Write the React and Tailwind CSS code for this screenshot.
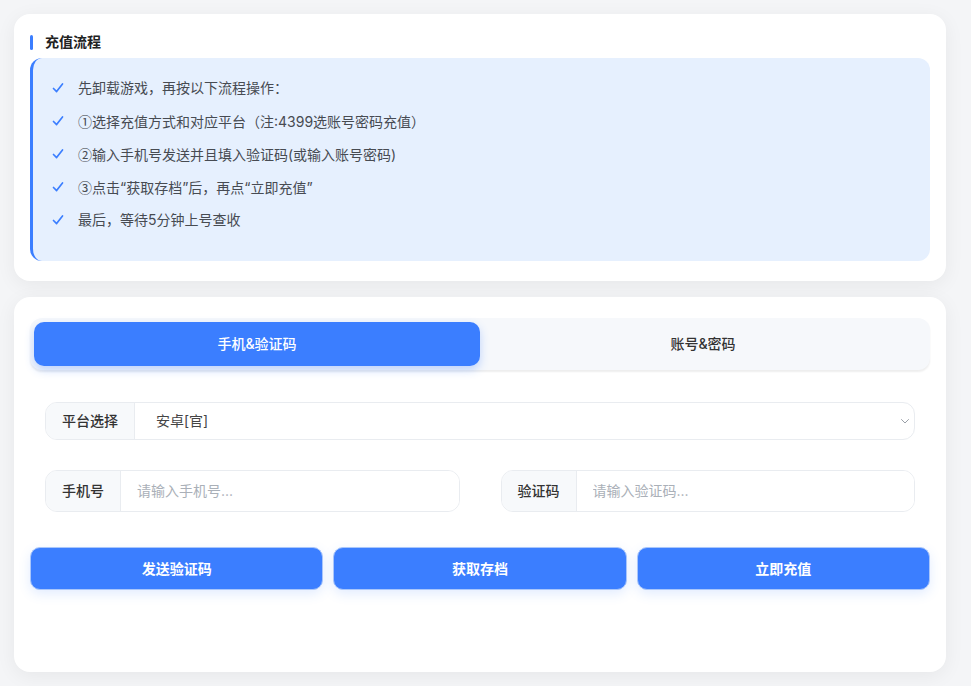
import React, { useState } from 'react';

const steps = [
  ['', '先卸载游戏，再按以下流程操作：'],
  ['①', '选择充值方式和对应平台（注:4399选账号密码充值）'],
  ['②', '输入手机号发送并且填入验证码(或输入账号密码)'],
  ['③', '点击“获取存档”后，再点“立即充值”'],
  ['', '最后，等待5分钟上号查收'],
];

function Check() {
  return (
    <svg width="12" height="12" viewBox="0 0 12 12" fill="none" className="shrink-0">
      <path d="M1.5 6.5 L4.6 9.6 L10.5 2" stroke="#3b7eff" strokeWidth="1.7" strokeLinecap="round" strokeLinejoin="round" />
    </svg>
  );
}

function Field({ label, labelW, placeholder, className }) {
  return (
    <div className={`flex h-[42px] rounded-xl border border-[#e9ecf0] overflow-hidden ${className}`}>
      <div className={`${labelW} flex items-center justify-center bg-[#f7f9fb] border-r border-[#e9ecf0] text-sm font-medium text-[#333]`}>
        {label}
      </div>
      <input
        placeholder={placeholder}
        className="flex-1 px-4 text-sm text-[#333] placeholder-[#aab0b8] outline-none bg-white"
      />
    </div>
  );
}

export default function App() {
  const [tab, setTab] = useState('phone');

  return (
    <div
      className="min-h-[686px] bg-[#f4f5f7] pt-[14px] pl-[14px]"
      style={{ fontFamily: "Inter, 'Noto Sans CJK SC', sans-serif" }}
    >
      <div className="w-[932px] flex flex-col gap-4">
        {/* 充值流程 */}
        <div className="bg-white rounded-2xl shadow-[0_4px_20px_rgba(0,0,0,0.06)] px-4 pt-[20px] pb-5">
          <div className="flex items-center gap-3 h-4 mb-[8px]">
            <span className="w-[3px] h-[15px] rounded-full bg-[#3b7eff]" />
            <h2 className="text-sm font-bold text-[#222]">充值流程</h2>
          </div>
          <div className="rounded-xl border-l-[3px] border-[#3b7eff] bg-[#e6f0fe] pl-[19px] pt-5 pb-[31px] flex flex-col gap-[13px]">
            {steps.map(([n, s]) => (
              <div key={s} className="flex items-center gap-[14px] h-5">
                <Check />
                <span className="text-sm text-[#474b52]">
                  {n && <span className="font-['Noto_Sans_CJK_SC']">{n}</span>}
                  {s}
                </span>
              </div>
            ))}
          </div>
        </div>

        {/* 表单 */}
        <div className="bg-white rounded-2xl shadow-[0_4px_20px_rgba(0,0,0,0.06)] px-4 pt-[21px] h-[375px]">
          <div className="flex p-1 rounded-xl bg-[#f6f8fb] shadow-[0_2px_2px_rgba(0,0,0,0.07)]">
            <button
              onClick={() => setTab('phone')}
              className={`flex-1 h-11 rounded-[10px] text-sm font-medium ${
                tab === 'phone'
                  ? 'bg-[#3b7eff] text-white shadow-[0_4px_10px_rgba(59,126,255,0.3)]'
                  : 'text-[#333]'
              }`}
            >
              手机&验证码
            </button>
            <button
              onClick={() => setTab('account')}
              className={`flex-1 h-11 rounded-[10px] text-sm font-medium ${
                tab === 'account'
                  ? 'bg-[#3b7eff] text-white shadow-[0_4px_10px_rgba(59,126,255,0.3)]'
                  : 'text-[#333]'
              }`}
            >
              账号&密码
            </button>
          </div>

          <div className="px-[15px] mt-8">
            <div className="flex h-[38px] rounded-xl border border-[#e9ecf0] overflow-hidden">
              <div className="w-[89px] flex items-center justify-center bg-[#f7f9fb] border-r border-[#e9ecf0] text-sm font-medium text-[#333]">
                平台选择
              </div>
              <div className="flex-1 flex items-center justify-between pl-[21px] pr-[3px]">
                <span className="text-sm text-[#444]">安卓[官]</span>
                <svg width="12" height="12" viewBox="0 0 12 12" fill="none">
                  <path d="M2.5 4.5 L6 8 L9.5 4.5" stroke="#9aa0a8" strokeWidth="1" strokeLinecap="round" />
                </svg>
              </div>
            </div>

            <div className="flex gap-[41px] mt-[30px]">
              <Field
                label={tab === 'phone' ? '手机号' : '账号'}
                labelW="w-[75px]"
                placeholder={tab === 'phone' ? '请输入手机号...' : '请输入账号...'}
                className="flex-1"
              />
              <Field
                label={tab === 'phone' ? '验证码' : '密码'}
                labelW="w-[75px]"
                placeholder={tab === 'phone' ? '请输入验证码...' : '请输入密码...'}
                className="flex-1"
              />
            </div>
          </div>

          <div className="flex gap-[10px] mt-[35px]">
            {['发送验证码', '获取存档', '立即充值'].map((b) => (
              <button
                key={b}
                className="flex-1 h-[43px] rounded-[10px] bg-[#3b7eff] border border-[#a9c6fb] text-white text-sm font-bold shadow-[0_4px_12px_rgba(59,126,255,0.15)]"
              >
                {b}
              </button>
            ))}
          </div>
        </div>
      </div>
    </div>
  );
}
